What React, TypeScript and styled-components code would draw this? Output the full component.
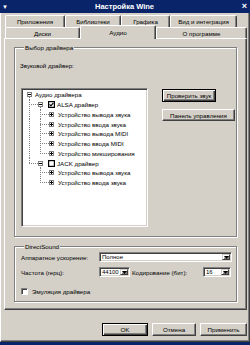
import React from "react";
import styled, { createGlobalStyle, css } from "styled-components";

const face = "#d4d0c8";
const light = "#ffffff";
const shadow = "#808080";
const dark = "#404040";
const navy = "#0a246a";

const GlobalStyle = createGlobalStyle`
  html, body {
    margin: 0;
    padding: 0;
    background: ${face};
  }
  body {
    font-family: "Liberation Sans", Arial, sans-serif;
    font-size: 6.2px;
    color: #000;
  }
  * {
    box-sizing: border-box;
  }
`;

const Screen = styled.div`
  width: 250px;
  height: 345px;
  display: flex;
  flex-direction: column;
  overflow: hidden;
  background: ${face};
`;

const TitleBar = styled.div`
  flex: none;
  height: 13px;
  display: flex;
  align-items: center;
  padding: 0 3px 0 2px;
  background: ${navy};
  color: #fff;
`;

const MenuGlyph = styled.span`
  width: 8px;
  font-size: 6px;
  line-height: 1;
`;

const TitleText = styled.div`
  flex: 1;
  text-align: center;
  font-weight: bold;
  font-size: 7.5px;
`;

const CloseGlyph = styled.span`
  width: 8px;
  text-align: right;
  font-weight: bold;
  font-size: 9px;
  line-height: 1;
`;

const Frame = styled.div`
  flex: none;
  height: 329px;
  display: flex;
  flex-direction: column;
  padding: 2px 2px 0 3px;
  border-left: 1px solid ${light};
  border-right: 1px solid ${dark};
  border-bottom: 1px solid ${dark};
  box-shadow: inset -1px -1px ${shadow};
`;

const TaskStrip = styled.div`
  flex: 1;
  background: ${navy};
`;

const TabRow = styled.div<{ $h: number }>`
  display: flex;
  height: ${({ $h }) => $h}px;
  padding-left: 1px;
`;

const Tab = styled.div<{ $w: number; $active?: boolean }>`
  flex: none;
  width: ${({ $w }) => $w}px;
  height: 100%;
  display: flex;
  align-items: center;
  justify-content: center;
  white-space: nowrap;
  border-top: 1px solid ${light};
  border-left: 1px solid ${light};
  border-right: 1px solid ${dark};
  border-radius: 2px 2px 0 0;
  box-shadow: inset -1px 0 ${shadow};
  background: ${face};

  ${({ $active }) =>
    $active &&
    css`
      position: relative;
      z-index: 1;
      height: calc(100% + 3px);
      margin-top: -2px;
    `}
`;

const Panel = styled.div`
  flex: none;
  width: 243px;
  height: 272px;
  display: flex;
  flex-direction: column;
  gap: 5px;
  padding: 4px 9px 0 9px;
  border: 1px solid;
  border-color: ${light} ${dark} ${dark} ${light};
  box-shadow: inset -1px -1px ${shadow};
`;

const Group = styled.fieldset<{ $h: number }>`
  margin: 0;
  min-width: 0;
  height: ${({ $h }) => $h}px;
  padding: 0 5px;
  border: 1px solid ${shadow};
  box-shadow: inset 1px 1px ${light}, 1px 1px ${light};
`;

const Legend = styled.legend`
  margin-left: 4px;
  padding: 0 1px;
  line-height: 9px;
  background: ${face};
`;

const FieldLabel = styled.div`
  line-height: 9px;
  margin-top: 9px;
`;

const DriverArea = styled.div`
  display: flex;
  align-items: flex-start;
  margin-top: 18px;
`;

const TreeBox = styled.div`
  flex: none;
  width: 127px;
  height: 139px;
  margin-left: 1px;
  background: #fff;
  border: 1px solid;
  border-color: ${shadow} ${light} ${light} ${shadow};
  box-shadow: inset 1px 1px ${dark}, inset -1px -1px ${face};
  padding: 1px 2px 2px;
`;

const TreeRow = styled.div`
  display: flex;
  align-items: center;
  height: 9.75px;
  white-space: nowrap;
`;

type GuideKind = "pipe" | "tee" | "elbow" | "blank";

const vDots = `repeating-linear-gradient(to bottom, ${shadow} 0 1px, transparent 1px 2px)`;
const hDots = `repeating-linear-gradient(to right, ${shadow} 0 1px, transparent 1px 2px)`;

const guideBackground = (kind: GuideKind) => {
  switch (kind) {
    case "pipe":
      return css`
        background-image: ${vDots};
        background-size: 1px 100%;
        background-position: 5px 0;
      `;
    case "tee":
      return css`
        background-image: ${vDots}, ${hDots};
        background-size: 1px 100%, 6px 1px;
        background-position: 5px 0, 5px 50%;
      `;
    case "elbow":
      return css`
        background-image: ${vDots}, ${hDots};
        background-size: 1px 50%, 6px 1px;
        background-position: 5px 0, 5px 50%;
      `;
    default:
      return css``;
  }
};

const Guide = styled.span<{ $kind: GuideKind }>`
  flex: none;
  width: 11px;
  height: 100%;
  background-repeat: no-repeat;
  ${({ $kind }) => guideBackground($kind)}
`;

const ExpanderCell = styled.span<{ $linked: boolean; $open: boolean }>`
  flex: none;
  width: 11px;
  height: 100%;
  display: flex;
  align-items: center;
  padding-left: 3px;
  background-repeat: no-repeat;
  background-image: ${({ $linked }) => ($linked ? hDots : "none")},
    ${({ $open }) => ($open ? vDots : "none")};
  background-size: 4px 1px, 1px 50%;
  background-position: 0 50%, 5px 100%;
`;

const CheckSlot = styled.span`
  display: flex;
  margin-left: 2px;
`;

const NodeLabel = styled.span<{ $gap: number }>`
  margin-left: ${({ $gap }) => $gap}px;
  line-height: 9px;
`;

const SideButtons = styled.div`
  display: flex;
  flex-direction: column;
  align-items: flex-start;
  gap: 7px;
  margin-left: 14px;
  margin-top: 1px;
`;

const Button = styled.div<{ $w: number; $h?: number; $default?: boolean }>`
  width: ${({ $w }) => $w}px;
  height: ${({ $h }) => $h ?? 12}px;
  display: flex;
  align-items: center;
  justify-content: center;
  white-space: nowrap;
  overflow: hidden;
  background: ${face};
  border: 1px solid;
  border-color: ${light} ${dark} ${dark} ${light};
  box-shadow: inset -1px -1px ${shadow};

  ${({ $default }) =>
    $default &&
    css`
      border: 1px solid #000;
      box-shadow: inset 1px 1px ${light}, inset -1px -1px ${dark},
        inset -2px -2px ${shadow};
    `}
`;

const SoundRow = styled.div<{ $top: number }>`
  display: flex;
  align-items: center;
  margin-top: ${({ $top }) => $top}px;
  margin-left: 1px;
  line-height: 9px;
  white-space: nowrap;
`;

const RowLabel = styled.span<{ $w: number; $pad?: number }>`
  flex: none;
  width: ${({ $w }) => $w}px;
  padding-left: ${({ $pad }) => $pad ?? 0}px;
`;

const SelectBox = styled.div<{ $w: number }>`
  flex: none;
  width: ${({ $w }) => $w}px;
  height: 10px;
  display: flex;
  align-items: stretch;
  background: #fff;
  border: 1px solid;
  border-color: ${shadow} ${light} ${light} ${shadow};
  box-shadow: inset 1px 1px ${dark}, inset -1px -1px ${face};
  padding: 1px;
`;

const SelectValue = styled.span`
  flex: 1;
  min-width: 0;
  overflow: hidden;
  padding-left: 1px;
  line-height: 7px;
  font-size: 6px;
`;

const ArrowButton = styled.span`
  flex: none;
  width: 8px;
  display: flex;
  align-items: center;
  justify-content: center;
  background: ${face};
  border: 1px solid;
  border-color: ${face} ${dark} ${dark} ${face};
  box-shadow: inset 1px 1px ${light}, inset -1px -1px ${shadow};
`;

const CheckSquare = styled.span`
  flex: none;
  width: 7px;
  height: 7px;
  background: #fff;
  border: 1px solid;
  border-color: ${shadow} ${light} ${light} ${shadow};
  box-shadow: inset 1px 1px ${dark};
  margin-right: 4px;
`;

const Footer = styled.div`
  display: flex;
  justify-content: flex-end;
  gap: 4px;
  margin-top: 13px;
`;

const Expander = ({ open }: { open: boolean }) => (
  <svg width="5" height="5" viewBox="0 0 5 5">
    <rect x="0.5" y="0.5" width="4" height="4" fill="#fff" stroke={shadow} />
    <path d="M1 2.5H4" stroke="#000" />
    {!open && <path d="M2.5 1V4" stroke="#000" />}
  </svg>
);

const TreeCheck = ({ checked }: { checked: boolean }) => (
  <svg width="7" height="7" viewBox="0 0 7 7">
    <rect x="0.6" y="0.6" width="5.8" height="5.8" fill="#fff" stroke="#000" strokeWidth="1.2" />
    {checked && <path d="M1.6 3.4L2.9 4.8L5.4 1.9" fill="none" stroke="#000" strokeWidth="1.2" />}
  </svg>
);

const DropArrow = () => (
  <svg width="5" height="3" viewBox="0 0 5 3">
    <path d="M0 0H5L2.5 3Z" fill="#000" />
  </svg>
);

interface ITreeNode {
  guides: GuideKind[];
  open?: boolean;
  check?: boolean;
  label: string;
  gap: number;
}

const treeNodes: ITreeNode[] = [
  { guides: [], open: true, label: "Аудио драйвера", gap: 0 },
  { guides: ["tee"], open: true, check: true, label: "ALSA драйвер", gap: 2 },
  { guides: ["pipe", "tee"], label: "Устройство вывода звука", gap: 1 },
  { guides: ["pipe", "tee"], label: "Устройство ввода звука", gap: 1 },
  { guides: ["pipe", "tee"], label: "Устройство вывода MIDI", gap: 1 },
  { guides: ["pipe", "tee"], label: "Устройство ввода MIDI", gap: 1 },
  { guides: ["pipe", "elbow"], label: "Устройство микширования", gap: 1 },
  { guides: ["elbow"], open: true, check: false, label: "JACK драйвер", gap: 2 },
  { guides: ["blank", "tee"], label: "Устройство вывода звука", gap: 1 },
  { guides: ["blank", "elbow"], label: "Устройство ввода звука", gap: 1 },
];

const backTabs = [
  { label: "Приложения", w: 60 },
  { label: "Библиотеки", w: 56 },
  { label: "Графика", w: 49 },
  { label: "Вид и интеграция", w: 67 },
];

const frontTabs = [
  { label: "Диски", w: 75 },
  { label: "Аудио", w: 76, active: true },
  { label: "О программе", w: 91 },
];

export default function App() {
  return (
    <Screen>
      <GlobalStyle />
      <TitleBar>
        <MenuGlyph>▼</MenuGlyph>
        <TitleText>Настройка Wine</TitleText>
        <CloseGlyph>×</CloseGlyph>
      </TitleBar>

      <Frame>
        <TabRow $h={12}>
          {backTabs.map((tab) => (
            <Tab key={tab.label} $w={tab.w}>
              {tab.label}
            </Tab>
          ))}
        </TabRow>
        <TabRow $h={11}>
          {frontTabs.map((tab) => (
            <Tab key={tab.label} $w={tab.w} $active={tab.active}>
              {tab.label}
            </Tab>
          ))}
        </TabRow>

        <Panel>
          <Group $h={194}>
            <Legend>Выбор драйвера</Legend>
            <FieldLabel>Звуковой драйвер:</FieldLabel>
            <DriverArea>
              <TreeBox>
                {treeNodes.map((node, i) => (
                  <TreeRow key={i}>
                    {node.guides.map((g, j) => (
                      <Guide key={j} $kind={g} />
                    ))}
                    <ExpanderCell $linked={node.guides.length > 0} $open={!!node.open}>
                      <Expander open={!!node.open} />
                    </ExpanderCell>
                    {node.check !== undefined && (
                      <CheckSlot>
                        <TreeCheck checked={node.check} />
                      </CheckSlot>
                    )}
                    <NodeLabel $gap={node.gap}>{node.label}</NodeLabel>
                  </TreeRow>
                ))}
              </TreeBox>
              <SideButtons>
                <Button $w={54} $h={13} $default>
                  Проверить звук
                </Button>
                <Button $w={73}>Панель управления</Button>
              </SideButtons>
            </DriverArea>
          </Group>

          <Group $h={60}>
            <Legend>DirectSound</Legend>
            <SoundRow $top={1}>
              <RowLabel $w={78}>Аппаратное ускорение:</RowLabel>
              <SelectBox $w={133}>
                <SelectValue>Полное</SelectValue>
                <ArrowButton>
                  <DropArrow />
                </ArrowButton>
              </SelectBox>
            </SoundRow>
            <SoundRow $top={5}>
              <RowLabel $w={78}>Частота (герц):</RowLabel>
              <SelectBox $w={31}>
                <SelectValue>44100</SelectValue>
                <ArrowButton>
                  <DropArrow />
                </ArrowButton>
              </SelectBox>
              <RowLabel $w={73} $pad={2}>
                Кодирование (бит):
              </RowLabel>
              <SelectBox $w={28}>
                <SelectValue>16</SelectValue>
                <ArrowButton>
                  <DropArrow />
                </ArrowButton>
              </SelectBox>
            </SoundRow>
            <SoundRow $top={10}>
              <CheckSquare />
              Эмуляция драйвера
            </SoundRow>
          </Group>
        </Panel>

        <Footer>
          <Button $w={46} $h={13} $default>
            OK
          </Button>
          <Button $w={44} $h={13}>
            Отмена
          </Button>
          <Button $w={47} $h={13}>
            Применить
          </Button>
        </Footer>
      </Frame>
      <TaskStrip />
    </Screen>
  );
}
